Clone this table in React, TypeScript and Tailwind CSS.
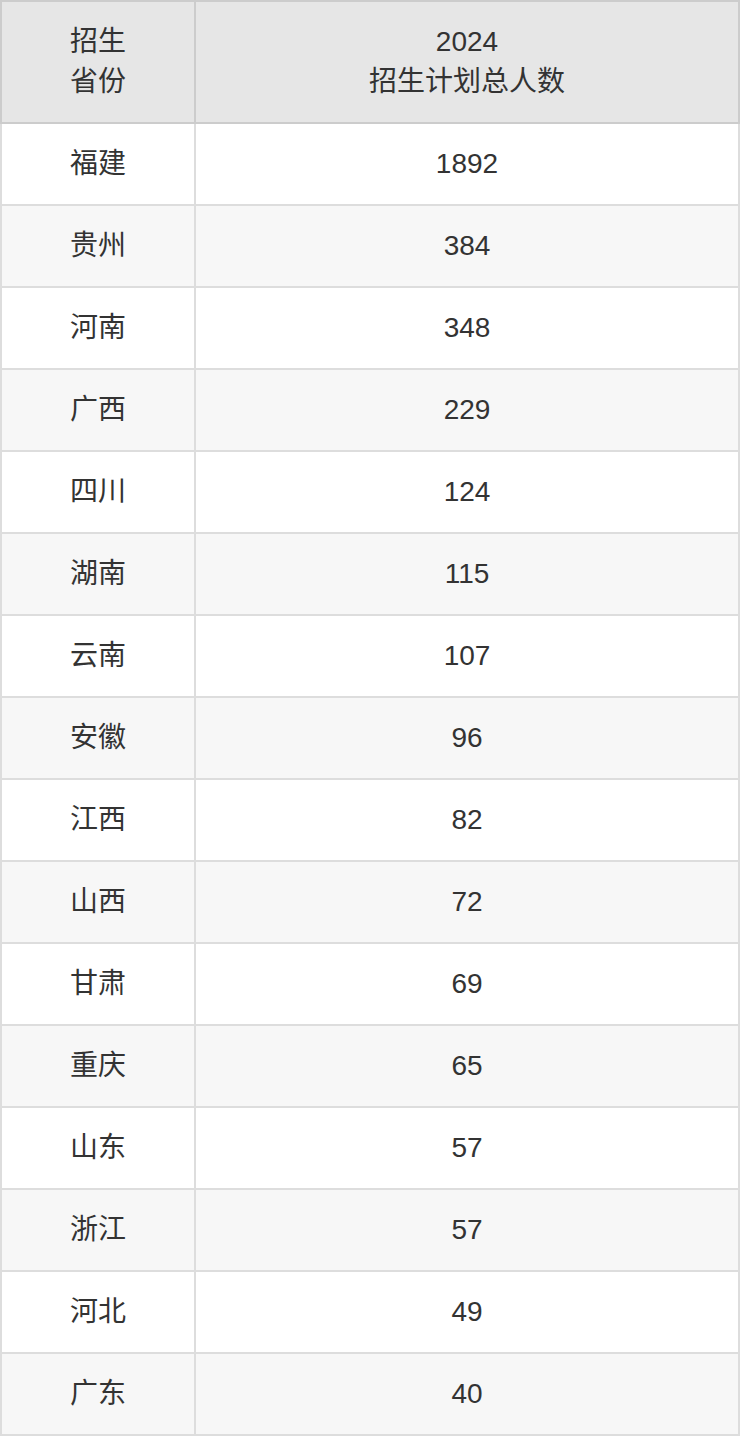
import React from "react";

const rows: [string, string][] = [
  ["福建", "1892"],
  ["贵州", "384"],
  ["河南", "348"],
  ["广西", "229"],
  ["四川", "124"],
  ["湖南", "115"],
  ["云南", "107"],
  ["安徽", "96"],
  ["江西", "82"],
  ["山西", "72"],
  ["甘肃", "69"],
  ["重庆", "65"],
  ["山东", "57"],
  ["浙江", "57"],
  ["河北", "49"],
  ["广东", "40"],
];

export default function App() {
  return (
    <div
      className="w-[740px] bg-white text-[28px] leading-[40px] text-[#333333]"
      style={{ fontFamily: '"Liberation Sans", "Noto Sans CJK SC", sans-serif' }}
    >
      <div className="flex h-[124px] border-2 border-[#cccccc] bg-[#e6e6e6]">
        <div className="flex w-[194px] flex-col items-center justify-center border-r-2 border-[#cccccc] text-center">
          <div>招生</div>
          <div>省份</div>
        </div>
        <div className="flex flex-1 flex-col items-center justify-center text-center">
          <div>2024</div>
          <div>招生计划总人数</div>
        </div>
      </div>
      {rows.map(([p, n], i) => (
        <div
          key={i}
          className={
            "flex h-[82px] border-x-2 border-b-2 border-[#dddddd] " +
            (i % 2 === 1 ? "bg-[#f7f7f7]" : "bg-white")
          }
        >
          <div className="flex w-[194px] items-center justify-center border-r-2 border-[#dddddd]">
            {p}
          </div>
          <div className="flex flex-1 items-center justify-center">{n}</div>
        </div>
      ))}
    </div>
  );
}
